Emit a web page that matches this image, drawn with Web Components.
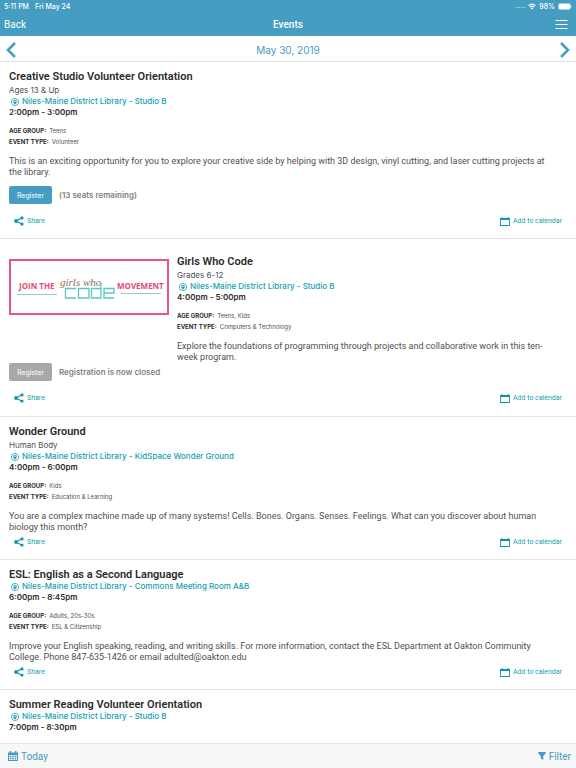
<!DOCTYPE html>
<html lang="en">
<head>
<meta charset="utf-8">
<meta name="viewport" content="width=device-width, initial-scale=1">
<title>Events</title>
<style>
  html, body {
    height: 100%;
    margin: 0;
  }

  body {
    --blue: #459dc1;
    --teal: #159fae;
    --line: #e4e4e4;
    --ink: #2b2b2b;
    --text: #505050;
    --narrow: Roboto, "Liberation Sans", sans-serif;
    font-family: Inter, Roboto, "Liberation Sans", sans-serif;
    font-size: 9px;
    line-height: 11px;
    color: var(--text);
    background: #fff;
  }
</style>
</head>
<body>
<events-app>
  <status-bar slot="top"></status-bar>
  <nav-bar slot="top">Events</nav-bar>
  <date-bar slot="top">May 30, 2019</date-bar>

  <event-card place="Niles-Maine District Library - Studio B" time="2:00pm - 3:00pm" ages="Teens" type="Volunteer" register="open" note="(13 seats remaining)">
    <span slot="title">Creative Studio Volunteer Orientation</span>
    <span slot="subtitle">Ages 13 &amp; Up</span>
    This is an exciting opportunity for you to explore your creative side by helping with 3D design, vinyl cutting, and laser cutting projects at the library.
  </event-card>

  <event-card place="Niles-Maine District Library - Studio B" time="4:00pm - 5:00pm" ages="Teens, Kids" type="Computers &amp; Technology" register="closed" note="Registration is now closed" media>
    <code-banner slot="media"></code-banner>
    <span slot="title">Girls Who Code</span>
    <span slot="subtitle">Grades 6-12</span>
    Explore the foundations of programming through projects and collaborative work in this ten-week program.
  </event-card>

  <event-card place="Niles-Maine District Library - KidSpace Wonder Ground" time="4:00pm - 6:00pm" ages="Kids" type="Education &amp; Learning">
    <span slot="title">Wonder Ground</span>
    <span slot="subtitle">Human Body</span>
    You are a complex machine made up of many systems! Cells. Bones. Organs. Senses. Feelings. What can you discover about human biology this month?
  </event-card>

  <event-card place="Niles-Maine District Library - Commons Meeting Room A&amp;B" time="6:00pm - 8:45pm" ages="Adults, 20s-30s" type="ESL &amp; Citizenship">
    <span slot="title">ESL: English as a Second Language</span>
    Improve your English speaking, reading, and writing skills. For more information, contact the ESL Department at Oakton Community College. Phone 847-635-1426 or email adulted@oakton.edu
  </event-card>

  <event-card place="Niles-Maine District Library - Studio B" time="7:00pm - 8:30pm">
    <span slot="title">Summer Reading Volunteer Orientation</span>
  </event-card>

  <tool-bar slot="bottom"></tool-bar>
</events-app>

<script>
class EventsApp extends HTMLElement {
  constructor() {
    super();
    this.attachShadow({ mode: "open" });
  }

  connectedCallback() {
    this.shadowRoot.innerHTML = /* html */`
    <style>
      :host {
        display: flex;
        flex-direction: column;
        height: 100%;
      }

      main {
        flex: 1;
        min-height: 0;
        overflow: hidden auto;
        scrollbar-width: none;
      }
    </style>
    <slot name="top"></slot>
    <main><slot></slot></main>
    <slot name="bottom"></slot>`;
  }
}

class StatusBar extends HTMLElement {
  constructor() {
    super();
    this.attachShadow({ mode: "open" });
  }

  connectedCallback() {
    this.shadowRoot.innerHTML = /* html */`
    <style>
      :host {
        display: flex;
        align-items: center;
        gap: 6px;
        height: 12px;
        padding: 0 4px;
        background: var(--blue);
        color: #fff;
        font-size: 7px;
        font-weight: 500;
      }

      .right {
        display: flex;
        align-items: center;
        gap: 3px;
        margin-left: auto;
      }

      svg {
        display: block;
      }
    </style>
    <span>5:11 PM</span>
    <span>Fri May 24</span>
    <div class="right">
      <svg width="9" height="8" fill="#fff" opacity=".5">
        <circle cx="1" cy="5.5" r=".8"/><circle cx="3.4" cy="5.5" r=".8"/><circle cx="5.8" cy="5.5" r=".8"/><circle cx="8.2" cy="5.5" r=".8"/>
      </svg>
      <svg width="8" height="7" viewBox="0 0 16 13" fill="none" stroke="#fff" stroke-width="2.4">
        <path d="M1 4.8Q8-1.4 15 4.8M3.600 7.600Q8 3.800 12.400 7.600"/>
        <path d="M8 12.500 5.200 9.800Q8 7.600 10.800 9.800Z" fill="#fff" stroke="none"/>
      </svg>
      <span>98%</span>
      <svg width="14" height="7" viewBox="0 0 14 7">
        <rect x=".5" y=".5" width="12" height="6" rx="1.5" fill="none" stroke="#fff" stroke-opacity=".5"/>
        <rect x="1" y="1" width="11" height="5" rx="1" fill="#fff"/>
        <path d="M13.200 2.400v2.200" stroke="#fff" stroke-opacity=".6"/>
      </svg>
    </div>`;
  }
}

class NavBar extends HTMLElement {
  constructor() {
    super();
    this.attachShadow({ mode: "open" });
  }

  connectedCallback() {
    this.shadowRoot.innerHTML = /* html */`
    <style>
      :host {
        display: grid;
        grid-template-columns: 1fr auto 1fr;
        align-items: center;
        height: 24px;
        padding: 0 8px 0 4px;
        background: var(--blue);
        color: #fff;
        font-family: var(--narrow);
        font-size: 10px;
      }

      button {
        border: 0;
        padding: 0;
        background: none;
        color: inherit;
        font: inherit;
      }

      .back {
        justify-self: start;
      }

      .menu {
        justify-self: end;
      }

      h1 {
        margin: 0;
        padding-left: 4px;
        font-size: inherit;
        font-weight: 500;
      }

      svg {
        display: block;
      }
    </style>
    <button type="button" class="back">Back</button>
    <h1><slot></slot></h1>
    <button type="button" class="menu" aria-label="Menu">
      <svg width="13" height="9" stroke="#fff"><path d="M.5 .5h12M.5 4.500h12M.5 8.500h12"/></svg>
    </button>`;
  }
}

class DateBar extends HTMLElement {
  constructor() {
    super();
    this.attachShadow({ mode: "open" });
  }

  connectedCallback() {
    this.shadowRoot.innerHTML = /* html */`
    <style>
      :host {
        display: flex;
        align-items: center;
        justify-content: space-between;
        height: 26px;
        padding: 3px 6px 0;
        box-sizing: border-box;
        border-bottom: 1px solid var(--line);
        color: var(--blue);
        font-size: 10px;
      }

      button {
        border: 0;
        padding: 0;
        background: none;
      }

      svg {
        display: block;
        fill: none;
        stroke: var(--blue);
        stroke-width: 2.500;
      }
    </style>
    <button type="button" aria-label="Previous day">
      <svg width="10" height="16"><path d="M9 1 2 8l7 7"/></svg>
    </button>
    <slot></slot>
    <button type="button" aria-label="Next day">
      <svg width="10" height="16"><path d="m1 1 7 7-7 7"/></svg>
    </button>`;
  }
}

class EventCard extends HTMLElement {
  constructor() {
    super();
    this.attachShadow({ mode: "open" });
  }

  static get styles() {
    return /* css */`
      :host {
        display: block;
        padding: 8px 9px;
        border-bottom: 1px solid var(--line);
      }

      :host(:last-of-type) {
        border-bottom: 0;
      }

      :host([media]) {
        padding: 16px 9px 9px;
      }

      :host([media]) .body {
        display: grid;
        grid-template-columns: 160px 1fr;
        gap: 8px;
      }

      ::slotted([slot="media"]) {
        margin-top: 4px;
      }

      h2 {
        margin: 0;
        color: var(--ink);
        font-family: var(--narrow);
        font-size: 11px;
        font-weight: 600;
        line-height: 13px;
      }

      ::slotted([slot="subtitle"]) {
        display: block;
        padding-top: 2px;
        font-size: 8px;
      }

      .place {
        display: flex;
        align-items: center;
        gap: 3px;
        padding-left: 2px;
        color: var(--teal);
        font-size: 8px;
        font-weight: 500;
        text-decoration: none;
      }

      .time {
        color: var(--ink);
        font-size: 8px;
        font-weight: 600;
      }

      dl {
        margin: 7px 0 9px;
        font-size: 6px;
      }

      dl div {
        display: flex;
        gap: 3px;
      }

      dt {
        color: var(--ink);
        font-weight: 700;
        text-transform: uppercase;
      }

      dd {
        margin: 0;
      }

      p {
        margin: 0;
        padding-right: 8px;
        font-family: var(--narrow);
      }

      .register {
        display: flex;
        align-items: center;
        gap: 7px;
        margin: 8px 0;
        color: #7f7f7f;
        font-size: 8px;
        font-weight: 600;
      }

      :host([media]) .register {
        margin-top: 0;
      }

      .register button {
        width: 43px;
        height: 18px;
        padding: 0;
        border: 0;
        border-radius: 2px;
        background: var(--blue);
        color: #fff;
        font: inherit;
        font-size: 7px;
        font-weight: 400;
      }

      .register button:disabled {
        background: #a8a8a8;
      }

      .actions {
        display: flex;
        justify-content: space-between;
        height: 18px;
        padding: 0 5px;
      }

      .actions button {
        display: flex;
        align-items: center;
        gap: 3px;
        border: 0;
        padding: 0;
        background: none;
        color: var(--teal);
        font-family: var(--narrow);
        font-size: 7px;
      }
    `;
  }

  get register() {
    const state = this.getAttribute("register");
    if (!state) return "";
    return /* html */`
    <div class="register">
      <button type="button" ${state === "closed" ? "disabled" : ""}>Register</button>
      <span>${this.getAttribute("note")}</span>
    </div>`;
  }

  get details() {
    if (!this.hasAttribute("ages")) return "";
    return /* html */`
    <dl>
      <div><dt>Age Group:</dt><dd>${this.getAttribute("ages")}</dd></div>
      <div><dt>Event Type:</dt><dd>${this.getAttribute("type")}</dd></div>
    </dl>`;
  }

  get actions() {
    if (!this.hasAttribute("ages")) return "";
    return /* html */`
    <div class="actions">
      <button type="button">
        <svg width="10" height="10" viewBox="0 0 20 20" fill="#0f98a8">
          <path d="M16 3.600 4 10l12 6.400" fill="none" stroke="#0f98a8" stroke-width="2.400"/>
          <circle cx="16" cy="3.800" r="3.200"/><circle cx="4" cy="10" r="3.800"/><circle cx="16" cy="16.200" r="3.200"/>
        </svg>
        Share
      </button>
      <button type="button">
        <svg width="10" height="9" viewBox="0 0 20 18" fill="#0f98a8">
          <path d="M0 2h3V0h2v2h10V0h2v2h3v16H0ZM1.800 6v10.200h16.400V6Z" fill-rule="evenodd"/>
        </svg>
        Add to calendar
      </button>
    </div>`;
  }

  connectedCallback() {
    this.shadowRoot.innerHTML = /* html */`
    <style>${EventCard.styles}</style>
    <div class="body">
      <slot name="media"></slot>
      <div>
        <h2><slot name="title"></slot></h2>
        <slot name="subtitle"></slot>
        <a class="place" href="#map">
          <svg width="8" height="8" viewBox="0 0 16 16">
            <circle cx="8" cy="8" r="7.200" fill="none" stroke="#159fae" stroke-width="1.500"/>
            <path d="M8 13.500C5.600 10.500 4.500 8.800 4.500 6.800a3.500 3.500 0 0 1 7 0C11.500 8.800 10.400 10.500 8 13.500Z" fill="#159fae"/>
            <circle cx="8" cy="6.700" r="1.500" fill="#fff"/>
          </svg>
          <span>${this.getAttribute("place")}</span>
        </a>
        <div class="time">${this.getAttribute("time")}</div>
        ${this.details}
        <p><slot></slot></p>
      </div>
    </div>
    ${this.register}
    ${this.actions}`;
  }
}

class CodeBanner extends HTMLElement {
  constructor() {
    super();
    this.attachShadow({ mode: "open" });
  }

  connectedCallback() {
    this.shadowRoot.innerHTML = /* html */`
    <style>
      :host {
        display: block;
      }

      svg {
        display: block;
        width: 100%;
      }

      .caps {
        font: 700 8px "Open Sans", sans-serif;
        fill: #df4b72;
      }

      .script {
        font: italic 11px "Liberation Serif", serif;
        fill: #8d6b50;
      }
    </style>
    <svg viewBox="0 0 160 56">
      <rect x="1" y="1" width="158" height="54" fill="#fff" stroke="#e8557d" stroke-width="2"/>
      <text class="caps" x="10" y="30">JOIN THE</text>
      <text class="caps" x="108" y="30">MOVEMENT</text>
      <path d="M8 35.500h40M112 34.500h40" stroke="#8fcfcc" stroke-width="1"/>
      <text class="script" x="51" y="27">girls who</text>
      <!-- square-cut lower half of the logo -->
      <g fill="none" stroke="#5bc6ca" stroke-width="1.300">
        <path d="M67 29.500H56.500V39H67"/>
        <path d="M69.500 29.500H80V39H69.500Z"/>
        <path d="M92 24v15H82.500V29.500H92"/>
        <path d="M95 34h10v-4.500H95V39h10"/>
      </g>
    </svg>`;
  }
}

class ToolBar extends HTMLElement {
  constructor() {
    super();
    this.attachShadow({ mode: "open" });
  }

  connectedCallback() {
    this.shadowRoot.innerHTML = /* html */`
    <style>
      :host {
        display: flex;
        justify-content: space-between;
        height: 24px;
        padding: 0 5px 0 8px;
        border-top: 1px solid var(--line);
        background: #f7f7f7;
      }

      button {
        display: flex;
        align-items: center;
        gap: 3px;
        border: 0;
        padding: 0;
        background: none;
        color: var(--blue);
        font-family: var(--narrow);
        font-size: 10px;
      }
    </style>
    <button type="button">
      <svg width="10" height="10" viewBox="0 0 20 20">
        <path d="M0 3h3V0h3v3h8V0h3v3h3v17H0Z" fill="#459dc1"/>
        <path d="M2 8h3v3H2zm4.300 0h3v3h-3zm4.400 0h3v3h-3zM15 8h3v3h-3zM2 12h3v2.500H2zm4.300 0h3v2.500h-3zm4.400 0h3v2.500h-3zM15 12h3v2.500h-3zM2 15.500h3V18H2zm4.300 0h3V18h-3zm4.400 0h3V18h-3zm4.300 0h3V18h-3z" fill="#f7f7f7"/>
      </svg>
      Today
    </button>
    <button type="button">
      <svg width="8" height="8" viewBox="0 0 16 16"><path d="M.500 0h15v2.500L10.500 8v8l-5-3V8L.500 2.500Z" fill="#459dc1"/></svg>
      Filter
    </button>`;
  }
}

customElements.define("events-app", EventsApp);
customElements.define("status-bar", StatusBar);
customElements.define("nav-bar", NavBar);
customElements.define("date-bar", DateBar);
customElements.define("event-card", EventCard);
customElements.define("code-banner", CodeBanner);
customElements.define("tool-bar", ToolBar);
</script>
</body>
</html>
